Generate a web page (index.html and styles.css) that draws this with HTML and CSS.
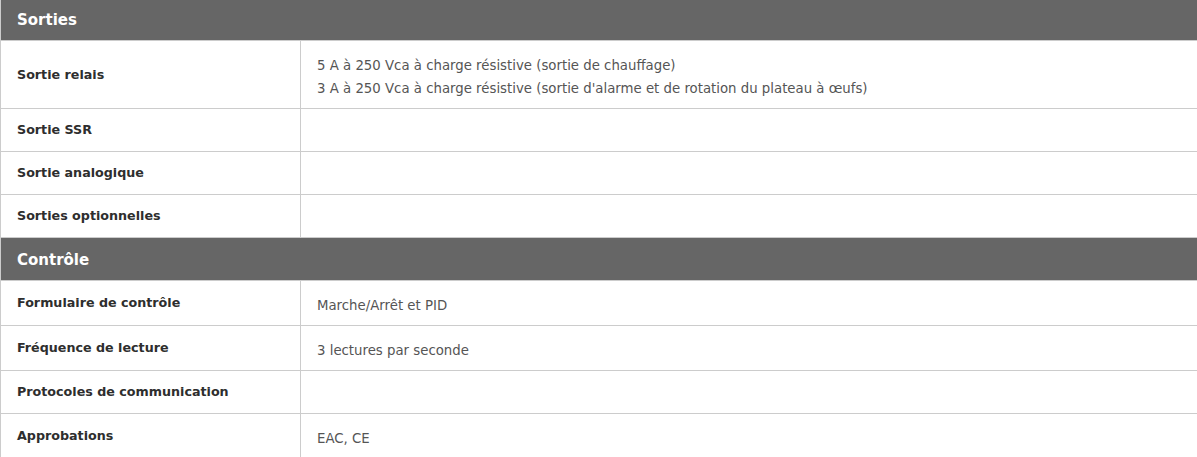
FILE: index.html
```html
<!DOCTYPE html>
<html lang="fr">
<head>
<meta charset="utf-8">
<title>Spécifications</title>
<link rel="stylesheet" href="styles.css">
</head>
<body>
<table class="specs">
  <colgroup><col class="col-label"><col class="col-value"></colgroup>
  <tbody>
    <tr class="section"><th colspan="2">Sorties</th></tr>
    <tr>
      <td class="label">Sortie relais</td>
      <td class="value">5 A à 250 Vca à charge résistive (sortie de chauffage)<br>3 A à 250 Vca à charge résistive (sortie d'alarme et de rotation du plateau à œufs)</td>
    </tr>
    <tr class="empty"><td class="label">Sortie SSR</td><td class="value"></td></tr>
    <tr class="empty"><td class="label">Sortie analogique</td><td class="value"></td></tr>
    <tr class="empty"><td class="label">Sorties optionnelles</td><td class="value"></td></tr>
    <tr class="section"><th colspan="2">Contrôle</th></tr>
    <tr><td class="label">Formulaire de contrôle</td><td class="value">Marche/Arrêt et PID</td></tr>
    <tr><td class="label">Fréquence de lecture</td><td class="value">3 lectures par seconde</td></tr>
    <tr class="empty"><td class="label">Protocoles de communication</td><td class="value"></td></tr>
    <tr><td class="label">Approbations</td><td class="value">EAC, CE</td></tr>
  </tbody>
</table>
</body>
</html>
```

FILE: styles.css
```css
html, body {
  margin: 0;
  padding: 0;
  background: #fff;
}
body {
  font-family: "DejaVu Sans", "Open Sans", sans-serif;
  overflow: hidden;
}
.specs {
  width: 1198px;
  margin-top: -3px;
  border-collapse: collapse;
  table-layout: fixed;
  border-left: 1px solid #cccccc;
}
.col-label { width: 300px; }
.section th {
  background: #666666;
  color: #ffffff;
  text-align: left;
  font-size: 15px;
  font-weight: 700;
  height: 43px;
  padding: 3px 16px 0;
  box-sizing: border-box;
  line-height: 20px;
  border-bottom: 1px solid #cccccc;
}
.specs td {
  border-bottom: 1px solid #cccccc;
  padding: 0 16px;
  vertical-align: middle;
}
.specs td.label {
  font-size: 12.7px;
  font-weight: 700;
  color: #2e2e2e;
  line-height: 16px;
  padding-top: 1px;
  border-right: 1px solid #cccccc;
  height: 43px;
  box-sizing: border-box;
}
.specs td.value {
  font-size: 13.3px;
  color: #555555;
  line-height: 23px;
  padding-top: 13px;
  padding-bottom: 8px;
}
.specs tr.empty td.value { padding: 0 16px; }
```
